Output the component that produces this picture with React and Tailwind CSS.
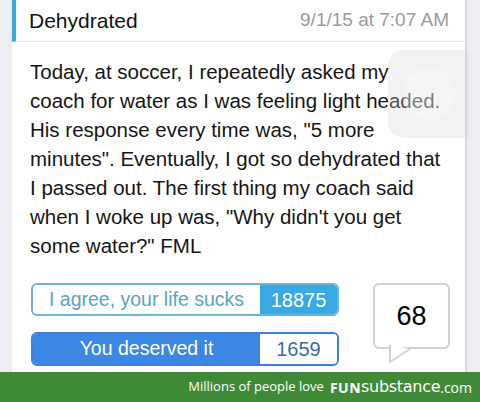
import React from 'react';

const lines = [
    'Today, at soccer, I repeatedly asked my',
    'coach for water as I was feeling light headed.',
    'His response every time was, "5 more',
    'minutes". Eventually, I got so dehydrated that',
    'I passed out. The first thing my coach said',
    'when I woke up was, "Why didn\'t you get',
    'some water?" FML',
];

const App = () => {
    return (
        <div className="w-[480px] h-[402px] bg-[#eceef1] flex flex-col overflow-hidden relative font-['Liberation_Sans',Arial,sans-serif]">
            <div className="flex-1 flex pl-[12px] min-h-0">
                <div className="w-[455px] bg-white border-r-2 border-[#d6d8db] flex flex-col">
                    {/* header */}
                    <div className="h-[42px] flex items-center justify-between border-b border-[#e6e6e6] border-l-4 border-l-[#39a9e0] pl-[13px] pr-[16px]">
                        <span className="text-[21px] text-[#111]">Dehydrated</span>
                        <span className="text-[19px] text-[#9b9b9b]">9/1/15 at 7:07 AM</span>
                    </div>

                    {/* body */}
                    <div className="pt-[15px] pl-[18px] text-[20.5px] leading-[29px] text-[#151515]">
                        {lines.map((l, i) => (
                            <div key={i} className="whitespace-nowrap">{l}</div>
                        ))}
                    </div>

                    {/* votes */}
                    <div className="flex pl-[19px] pt-[23px]">
                        <div className="flex flex-col gap-[16px]">
                            <div className="w-[308px] h-[33px] flex rounded-[6px] border-2 border-[#6cb4d6] overflow-hidden">
                                <div className="flex-1 flex items-center justify-center text-[19.5px] text-[#5da3c4]">I agree, your life sucks</div>
                                <div className="w-[77px] bg-[#39a9e6] flex items-center justify-center text-[20px] text-white">18875</div>
                            </div>
                            <div className="w-[308px] h-[34px] flex rounded-[6px] border-2 border-[#3a80dc] overflow-hidden">
                                <div className="flex-1 bg-[#3b87e3] flex items-center justify-center text-[19.5px] text-white">You deserved it</div>
                                <div className="w-[77px] bg-white flex items-center justify-center text-[20px] text-[#3b6aa3]">1659</div>
                            </div>
                        </div>

                        <div className="ml-[34px] relative w-[77px] h-[66px]">
                            <div className="w-full h-full border-2 border-[#d2d2d2] rounded-[6px] bg-white flex items-center justify-center text-[27px] text-black">68</div>
                            <svg className="absolute left-[15px] top-[62px]" width="24" height="20" viewBox="0 0 24 20">
                                <path d="M2 0 L2 17 L22 4" fill="white" stroke="#d2d2d2" strokeWidth="2" strokeLinejoin="round" />
                            </svg>
                        </div>
                    </div>
                </div>
            </div>

            {/* assistive touch overlay */}
            <div className="absolute left-[388px] top-[50px] w-[81px] h-[88px] rounded-l-[16px] bg-[#d4d4d4]/30 flex items-center justify-center">
                <div className="w-[52px] h-[52px] rounded-full bg-white/25" />
            </div>

            {/* footer */}
            <div className="h-[30px] bg-[#3f8a36] flex items-center justify-end pr-[8px] text-white">
                <span className="text-[13px] font-['Open_Sans',sans-serif] mr-[6px]">Millions of people love</span>
                <span className="text-[14px] font-bold font-['Open_Sans',sans-serif] tracking-[0.5px]">FUN</span>
                <span className="text-[16px] font-['DejaVu_Sans',sans-serif] leading-none tracking-[-0.3px]">substance</span>
                <span className="text-[14px] font-['Open_Sans',sans-serif]">.com</span>
            </div>
        </div>
    );
};

export default App;
